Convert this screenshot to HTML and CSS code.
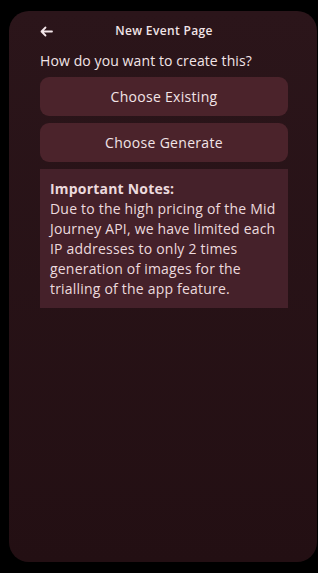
FILE: index.html
```html
<!DOCTYPE html>
<html>
<head>
<meta charset="utf-8">
<link rel="stylesheet" href="styles.css">
</head>
<body>
<div class="screen">
  <header class="topbar">
    <svg class="back" width="13" height="11" viewBox="0 0 13 11" fill="none" stroke="#f3e6e9" stroke-width="1.8" stroke-linecap="round" stroke-linejoin="round">
      <path d="M12 5.5H1.5M5.5 1.5L1.5 5.5L5.5 9.5"/>
    </svg>
    <div class="title">New Event Page</div>
  </header>
  <div class="content">
    <p class="question">How do you want to create this?</p>
    <button class="choice">Choose Existing</button>
    <button class="choice">Choose Generate</button>
    <div class="notes">
      <strong>Important Notes:</strong><br>
      Due to the high pricing of the Mid Journey API, we have limited each IP addresses to only 2 times generation of images for the trialling of the app feature.
    </div>
  </div>
</div>
</body>
</html>
```
FILE: styles.css
```css
html, body {
  margin: 0;
  background: #000;
  height: 100%;
}
body {
  padding: 11px 1px 11px 9px;
  box-sizing: border-box;
  font-family: "Open Sans", "Liberation Sans", sans-serif;
  color: #f2e4e7;
}
.screen {
  height: 100%;
  border-radius: 20px;
  background: linear-gradient(#2b151a, #230f13);
  padding: 0 29px 0 31px;
  box-sizing: border-box;
}
.topbar {
  position: relative;
  height: 41px;
  display: flex;
  align-items: center;
  justify-content: center;
}
.back {
  position: absolute;
  left: 0;
  top: 15px;
}
.title {
  font-size: 12px;
  font-weight: 600;
  letter-spacing: 0.35px;
  margin-top: -3px;
}
.content {
  display: flex;
  flex-direction: column;
  gap: 7px;
}
.question {
  margin: 0;
  font-size: 14px;
  letter-spacing: 0.1px;
  line-height: 18px;
}
.choice {
  height: 39px;
  border: none;
  border-radius: 9px;
  background: #4b232b;
  color: #f2e4e7;
  font-family: inherit;
  font-size: 14px;
  letter-spacing: 0.3px;
  padding: 0;
}
.notes {
  background: #45212a;
  padding: 10px 8px 10px 10px;
  font-size: 14px;
  letter-spacing: 0.2px;
  line-height: 20px;
  height: 139px;
  box-sizing: border-box;
  color: #ecdade;
}
.notes strong {
  font-weight: 700;
}
```
